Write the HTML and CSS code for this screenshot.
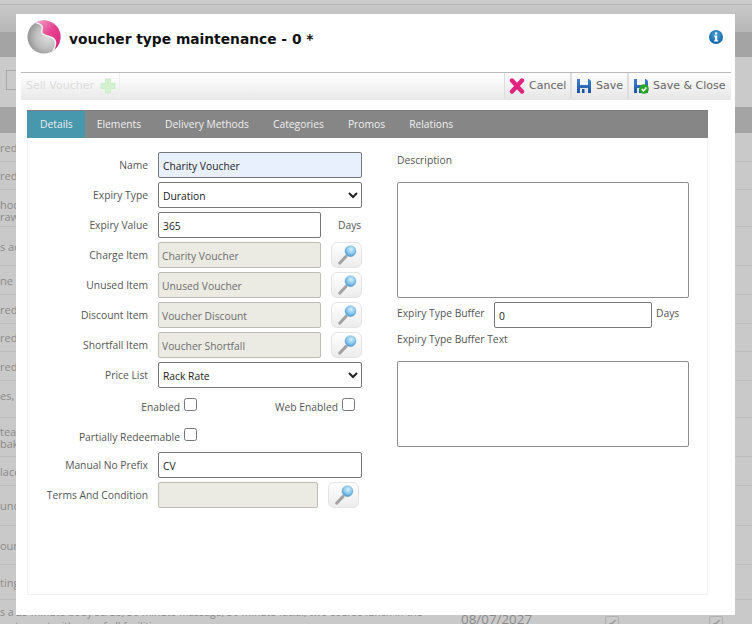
FILE: index.html
```html
<!DOCTYPE html>
<html lang="en">
<head>
  <meta charset="UTF-8">
  <title>voucher type maintenance</title>
  <link rel="stylesheet" href="styles.css">
</head>
<body>
  <svg class="defs" width="0" height="0">
    <defs>
      <radialGradient id="glass" cx="55%" cy="35%" r="65%">
        <stop offset="0" stop-color="#d4f0fb"/>
        <stop offset="0.6" stop-color="#86c6ea"/>
        <stop offset="1" stop-color="#4c94cc"/>
      </radialGradient>
      <linearGradient id="disk" x1="0" y1="0" x2="0" y2="1">
        <stop offset="0" stop-color="#3f7fd0"/>
        <stop offset="1" stop-color="#1c55a3"/>
      </linearGradient>
      <radialGradient id="sphere" cx="60%" cy="50%" r="62%">
        <stop offset="0" stop-color="#dedede"/>
        <stop offset="0.6" stop-color="#bcbcbc"/>
        <stop offset="1" stop-color="#909090"/>
      </radialGradient>
      <linearGradient id="pink" x1="0" y1="0" x2="1" y2="1">
        <stop offset="0" stop-color="#f0a8c8"/>
        <stop offset="0.5" stop-color="#e6408f"/>
        <stop offset="1" stop-color="#d9247c"/>
      </linearGradient>
      <radialGradient id="infoball" cx="50%" cy="35%" r="70%">
        <stop offset="0" stop-color="#4aa3dc"/>
        <stop offset="1" stop-color="#0a5c9c"/>
      </radialGradient>
      <symbol id="lens" viewBox="0 0 24 24">
        <path d="M4 21 L11 13.5" stroke="#a2a2a2" stroke-width="3.2" stroke-linecap="round"/>
        <circle cx="15.8" cy="7.8" r="6" fill="url(#glass)" stroke="#6ba9d6" stroke-width="0.5"/>
      </symbol>
      <symbol id="floppy" viewBox="0 0 16 16">
        <path d="M1 1 H13 L15 3 V15 H1 Z" fill="url(#disk)"/>
        <rect x="4" y="1" width="8" height="6" fill="#f4f6fa"/>
        <rect x="4" y="10" width="8" height="5" fill="#e4e8ee"/>
        <rect x="6" y="11" width="2.5" height="4" fill="#1c55a3"/>
      </symbol>
    </defs>
  </svg>

  <!-- page behind the dialog, dimmed -->
  <div class="backdrop">
    <div class="top-strip"></div>
    <div class="top-band"></div>
    <div class="dark-band"></div>
    <div class="search-band"><span class="search-box"></span></div>
    <div class="dark-band short"></div>
    <div class="bg-row h29">red</div>
    <div class="bg-row h28">red</div>
    <div class="bg-row h37">hoo<br>raw</div>
    <div class="bg-row h39">s ac</div>
    <div class="bg-row h29">ne</div>
    <div class="bg-row h29">red</div>
    <div class="bg-row h28">red</div>
    <div class="bg-row h29">red</div>
    <div class="bg-row h37">es,</div>
    <div class="bg-row h39">tea<br>bak</div>
    <div class="bg-row h29">lace</div>
    <div class="bg-row h40">unc</div>
    <div class="bg-row h39">our</div>
    <div class="bg-row h35">ting</div>
    <div class="bg-row last">
      <span class="bg-desc">s a 25 minute body scrub, 30 minute massage, 30 minute facial, two course lunch in the restaurant with use of all facilities</span>
      <span class="bg-date">08/07/2027</span>
      <span class="bg-check">✔</span>
      <span class="bg-check">✔</span>
    </div>
  </div>

  <div class="modal">
    <div class="modal-head">
      <svg class="logo" width="34" height="34" viewBox="0 0 34 34">
        <circle cx="17" cy="17" r="16.5" fill="url(#sphere)"/>
        <path d="M9 2.6 A16.5 16.5 0 0 1 33.4 19 A16.5 16.5 0 0 1 26 30.8 C30 24 29 19.5 25 17.5 C20 15.5 13 15.5 15 9.5 C16 6.5 15 4.5 9 2.6 Z" fill="url(#pink)"/>
        <path d="M9 2.6 C15 4.5 16 6.5 15 9.5 C13 15.5 20 15.5 25 17.5 C29 19.5 30 24 26 30.8" fill="none" stroke="#efefef" stroke-width="1.5"/>
      </svg>
      <h1>voucher type maintenance - 0 *</h1>
      <svg class="info" width="14" height="14" viewBox="0 0 14 14">
        <circle cx="7" cy="7" r="7" fill="url(#infoball)"/>
        <rect x="6" y="2.4" width="2.2" height="2" fill="#fff"/>
        <path d="M5.2 5.6 H8.2 V10.2 H9.2 V11.5 H5.2 V10.2 H6 V6.9 H5.2 Z" fill="#fff"/>
      </svg>
    </div>

    <div class="toolbar">
      <button class="tool sell" type="button">Sell Voucher
        <svg width="16" height="16" viewBox="0 0 16 16"><path d="M5.5 1 H10.5 V5.5 H15 V10.5 H10.5 V15 H5.5 V10.5 H1 V5.5 H5.5 Z" fill="#d4f2d0" stroke="#c4ebc0" stroke-width="0.8" stroke-linejoin="round"/></svg>
      </button>
      <span class="spacer"></span>
      <button class="tool cancel" type="button">
        <svg width="16" height="16" viewBox="0 0 16 16"><path d="M3 2.5 L13 13.5 M13 2.5 L3 13.5" stroke="#e0257f" stroke-width="4.4" stroke-linecap="round"/></svg>
        Cancel
      </button>
      <button class="tool save" type="button">
        <svg width="16" height="16"><use href="#floppy"/></svg>
        Save
      </button>
      <button class="tool save-close" type="button">
        <svg width="16" height="16" viewBox="0 0 16 16">
          <use href="#floppy" width="16" height="16"/>
          <circle cx="11" cy="11" r="4.8" fill="#2aa52a"/>
          <path d="M8.8 11 L10.5 12.8 L13.4 9.4" fill="none" stroke="#fff" stroke-width="1.5"/>
        </svg>
        Save &amp; Close
      </button>
    </div>

    <div class="tabs">
      <a class="tab active">Details</a>
      <a class="tab">Elements</a>
      <a class="tab">Delivery Methods</a>
      <a class="tab">Categories</a>
      <a class="tab">Promos</a>
      <a class="tab">Relations</a>
    </div>

    <div class="panel">
      <div class="col-left">
        <div class="row">
          <label>Name</label>
          <input class="wide autofilled" type="text" value="Charity Voucher">
        </div>
        <div class="row">
          <label>Expiry Type</label>
          <select class="wide"><option>Duration</option></select>
        </div>
        <div class="row">
          <label>Expiry Value</label>
          <input class="mid" type="text" value="365">
          <span class="days">Days</span>
        </div>
        <div class="row">
          <label>Charge Item</label>
          <input class="mid locked" type="text" value="Charity Voucher" readonly>
          <button class="find" type="button"><svg width="22" height="22"><use href="#lens"/></svg></button>
        </div>
        <div class="row">
          <label>Unused Item</label>
          <input class="mid locked" type="text" value="Unused Voucher" readonly>
          <button class="find" type="button"><svg width="22" height="22"><use href="#lens"/></svg></button>
        </div>
        <div class="row">
          <label>Discount Item</label>
          <input class="mid locked" type="text" value="Voucher Discount" readonly>
          <button class="find" type="button"><svg width="22" height="22"><use href="#lens"/></svg></button>
        </div>
        <div class="row">
          <label>Shortfall Item</label>
          <input class="mid locked" type="text" value="Voucher Shortfall" readonly>
          <button class="find" type="button"><svg width="22" height="22"><use href="#lens"/></svg></button>
        </div>
        <div class="row">
          <label>Price List</label>
          <select class="wide"><option>Rack Rate</option></select>
        </div>
        <div class="row checks">
          <span class="check first"><label>Enabled</label><input type="checkbox"></span>
          <span class="check"><label>Web Enabled</label><input type="checkbox"></span>
        </div>
        <div class="row checks">
          <span class="check first"><label>Partially Redeemable</label><input type="checkbox"></span>
        </div>
        <div class="row">
          <label>Manual No Prefix</label>
          <input class="wide" type="text" value="CV">
        </div>
        <div class="row">
          <label>Terms And Condition</label>
          <input class="terms locked" type="text" readonly>
          <button class="find near" type="button"><svg width="22" height="22"><use href="#lens"/></svg></button>
        </div>
      </div>

      <div class="col-right">
        <label class="desc-label">Description</label>
        <textarea class="desc"></textarea>
        <div class="buffer">
          <label>Expiry Type Buffer</label>
          <input type="text" value="0">
          <span>Days</span>
        </div>
        <label class="buffer-label">Expiry Type Buffer Text</label>
        <textarea class="buffer-text"></textarea>
      </div>
    </div>
  </div>
</body>
</html>
```

FILE: styles.css
```css
html, body {
  margin: 0;
  height: 624px;
  overflow: hidden;
}
body {
  font-family: "Open Sans", "Noto Sans", sans-serif;
  font-size: 10.3px;
  color: #555;
  background-color: #c9c9c9;
}
.defs {
  position: absolute;
}

/* dimmed page */
.backdrop {
  height: 624px;
  overflow: hidden;
  color: #8a8a8a;
  font-size: 10.4px;
}
.top-strip {
  height: 4px;
  background-color: #cbcbcb;
  border-bottom: 1px solid #b5b5b5;
}
.top-band {
  height: 27px;
  background: linear-gradient(#c9c9c9, #b6b6b6);
}
.dark-band {
  height: 25px;
  background-color: #a4a4a4;
}
.dark-band.short {
  height: 26px;
}
.search-band {
  height: 50px;
  box-sizing: border-box;
  padding-top: 13px;
  background-color: #cacaca;
}
.search-box {
  display: block;
  width: 30px;
  height: 20px;
  margin-left: 6px;
  box-sizing: border-box;
  border: 1px solid #a8a8a8;
}
.bg-row {
  box-sizing: border-box;
  display: flex;
  align-items: center;
  padding-top: 1px;
  border-bottom: 1px solid #bcbcbc;
  font-size: 11px;
  line-height: 12px;
}
.h28 { height: 28px; }
.h29 { height: 29px; }
.h35 { height: 35px; }
.h37 { height: 37px; display: block; padding-top: 9px; }
.h39 { height: 39px; }
.h40 { height: 40px; }
.bg-row.last {
  align-items: flex-start;
  height: 40px;
  padding-top: 5px;
  border: 0;
  font-size: 10.4px;
}
.bg-desc {
  width: 461px;
  flex: none;
  line-height: 14px;
  padding-right: 30px;
  box-sizing: border-box;
}
.bg-date {
  width: 144px;
  flex: none;
  margin-top: 8px;
  font-size: 13.4px;
}
.bg-check {
  box-sizing: border-box;
  width: 14px;
  height: 14px;
  margin: 11px 90px 0 0;
  flex: none;
  border: 1px solid #b0b0b0;
  border-radius: 2px;
  font-size: 11px;
  text-align: center;
  color: #999;
}

/* dialog */
.modal {
  position: absolute;
  left: 16px;
  top: 14px;
  width: 719px;
  height: 601px;
  background-color: #fff;
}
.modal-head {
  display: flex;
  align-items: flex-start;
  height: 58px;
}
.logo {
  margin: 6px 0 0 11px;
}
.modal-head h1 {
  margin: 17px 0 0 8px;
  font-family: "DejaVu Sans", sans-serif;
  font-size: 13.8px;
  font-weight: bold;
  color: #111;
}
.info {
  margin: 16px 12px 0 auto;
}

.toolbar {
  display: flex;
  height: 28px;
  margin: 0 4px 0 5px;
  border-top: 1px solid #b9b9b9;
  box-sizing: border-box;
  background: linear-gradient(#fff, #e9e9e9);
}
.spacer {
  flex: 1;
}
.tool {
  display: flex;
  align-items: center;
  padding: 0 0 2px;
  margin: 0;
  border: 0;
  border-left: 1px solid #dedede;
  border-right: 1px solid #dedede;
  border-radius: 0 0 3px 3px;
  background: linear-gradient(#fdfdfd, #e6e6e6);
  font-family: "DejaVu Sans", sans-serif;
  font-size: 11px;
  color: #666;
  gap: 4px;
}
.tool.sell {
  width: 99px;
  padding-left: 5px;
  gap: 6px;
  color: #dcdcdc;
  background: none;
  border-left: 0;
  border-right: 1px solid #efefef;
}
.tool.cancel {
  width: 67px;
  padding-left: 4px;
}
.tool.save {
  width: 57px;
  padding-left: 4px;
}
.tool.save-close {
  width: 103px;
  padding-left: 4px;
  border-right: 0;
}

.tabs {
  display: flex;
  width: 681px;
  height: 28px;
  margin: 10px 0 0 11px;
  border-top: 1px solid #7d7d7d;
  box-sizing: border-box;
  background-color: #868686;
}
.tab {
  padding: 0 12px;
  line-height: 27px;
  font-size: 10.3px;
  color: #efefef;
}
.tab.active {
  padding-left: 13px;
  background-color: #4797ad;
}

.panel {
  display: flex;
  gap: 35px;
  width: 681px;
  height: 457px;
  margin-left: 11px;
  padding-top: 14px;
  box-sizing: border-box;
  border: 1px solid #f0f0f0;
  border-top: 0;
}
.col-left {
  width: 334px;
  flex: none;
}
.row {
  display: flex;
  align-items: center;
  height: 26px;
  margin-bottom: 4px;
}
.row > label {
  width: 120px;
  margin-right: 10px;
  flex: none;
  text-align: right;
}

input[type="text"], select, textarea {
  box-sizing: border-box;
  margin: 0;
  border: 1px solid #777;
  border-radius: 2px;
  background-color: #fff;
  font-family: "Open Sans", "Noto Sans", sans-serif;
  font-size: 10.3px;
  color: #222;
}
input[type="text"], select {
  height: 26px;
  padding: 1px 4px 0;
}
select {
  padding: 1px 0 0;
}
.wide { width: 204px; }
.mid { width: 163px; }
.terms { width: 160px; }
input.autofilled {
  background-color: #e8f0fe;
}
input.locked {
  background-color: #ebebe4;
  border-color: #bdbdb6;
  color: #6d6d6d;
  padding-left: 3px;
}
.days {
  margin-left: 17px;
}
.find {
  display: flex;
  align-items: center;
  justify-content: center;
  width: 31px;
  height: 26px;
  margin-left: 10px;
  padding: 0;
  border: 1px solid #e4e4e4;
  border-radius: 6px;
  background: linear-gradient(#fff, #ececec);
}

.row.checks {
  justify-content: space-between;
  align-items: flex-start;
  padding-right: 7px;
  line-height: 14px;
}
.check {
  display: flex;
  align-items: flex-start;
  padding-top: 6px;
}
.check.first {
  width: 169px;
  justify-content: flex-end;
}
.check input {
  width: 13px;
  height: 13px;
  margin: 0 0 0 4px;
}
.check label {
  margin-top: 2px;
}

.col-right {
  width: 292px;
  flex: none;
}
.col-right label {
  display: block;
}
.desc-label {
  height: 30px;
  line-height: 17px;
}
textarea {
  display: block;
  width: 292px;
  resize: none;
  border-color: #8c8c8c;
}
textarea.desc {
  height: 116px;
}
.buffer {
  display: flex;
  align-items: center;
  height: 26px;
  margin-top: 4px;
}
.buffer label {
  width: 97px;
  margin-top: -4px;
  flex: none;
}
.buffer input {
  width: 158px;
}
.buffer span {
  margin: -4px 0 0 4px;
}
.buffer-label {
  height: 33px;
  line-height: 22px;
}
textarea.buffer-text {
  height: 86px;
}
```
